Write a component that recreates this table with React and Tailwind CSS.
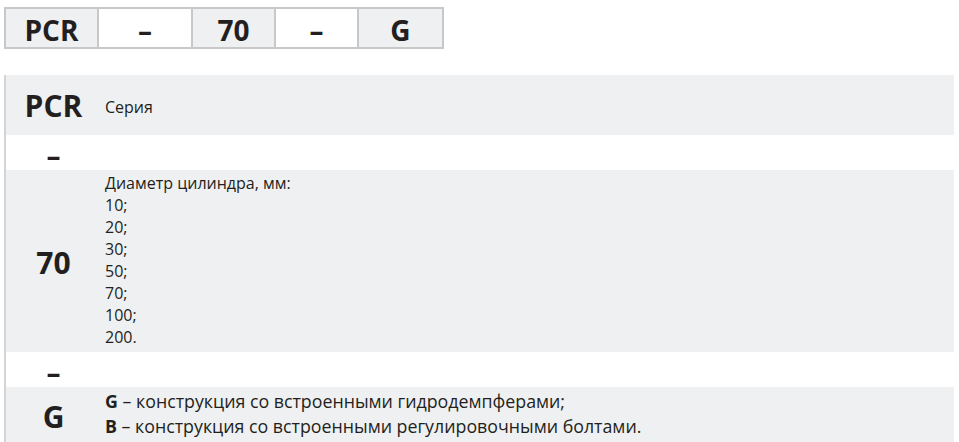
// Order code table - PCR series
const font = { fontFamily: '"Open Sans", "Liberation Sans", sans-serif' };

const codeCells = [
  { text: 'PCR', w: 'w-[93px]', bg: 'bg-[#eff0f2]' },
  { text: '–', w: 'w-[94px]', bg: 'bg-white' },
  { text: '70', w: 'w-[83px]', bg: 'bg-[#eff0f2]' },
  { text: '–', w: 'w-[83px]', bg: 'bg-white' },
  { text: 'G', w: 'w-[83px]', bg: 'bg-[#eff0f2]' },
];

const sizes = ['10;', '20;', '30;', '50;', '70;', '100;', '200.'];

const Row = ({ label, bg, h, labelClass = 'text-[30px]', children }) => (
  <div className={`flex ${bg} ${h}`}>
    <div className={`w-[95px] shrink-0 flex items-center justify-center font-bold ${labelClass}`}>
      {label}
    </div>
    <div className="flex-1 pl-[4px] text-[16px] leading-[22px]">{children}</div>
  </div>
);

export default function App() {
  return (
    <div className="w-[959px] h-[442px] overflow-hidden bg-white text-[#231f20]" style={font}>
      <div className="pt-[7px] pl-[4px]">
        <div className="flex w-fit border-2 border-[#c8c8c8] divide-x-2 divide-[#c8c8c8]">
          {codeCells.map((c, i) => (
            <div
              key={i}
              className={`${c.w} ${c.bg} h-[38px] pt-[3px] flex items-center justify-center text-[28px] font-bold leading-none`}
            >
              {c.text}
            </div>
          ))}
        </div>
      </div>

      <div className="mt-[26px] ml-[4px] w-[950px] border-l-2 border-[#d4d4d4]">
        <Row label="PCR" bg="bg-[#eff0f2]" h="h-[60px]">
          <div className="h-full flex items-center pt-[3px]">Серия</div>
        </Row>
        <Row label="–" bg="bg-white" h="h-[35px]" labelClass="text-[28px] pt-[5px]" />
        <Row label="70" bg="bg-[#eff0f2]" h="h-[182px]" labelClass="text-[30px] pt-[2px]">
          <div className="pt-[2px]">
            <div>Диаметр цилиндра, мм:</div>
            {sizes.map((s) => (
              <div key={s}>{s}</div>
            ))}
          </div>
        </Row>
        <Row label="–" bg="bg-white" h="h-[35px]" labelClass="text-[28px] pt-[5px]" />
        <Row label="G" bg="bg-[#eff0f2]" h="h-[56px]" labelClass="text-[30px] pt-[2px]">
          <div className="pt-[2px] text-[17.8px] leading-[25px]">
            <div>
              <span className="font-bold">G</span> – конструкция со встроенными гидродемпферами;
            </div>
            <div>
              <span className="font-bold">B</span> – конструкция со встроенными регулировочными болтами.
            </div>
          </div>
        </Row>
      </div>
    </div>
  );
}
